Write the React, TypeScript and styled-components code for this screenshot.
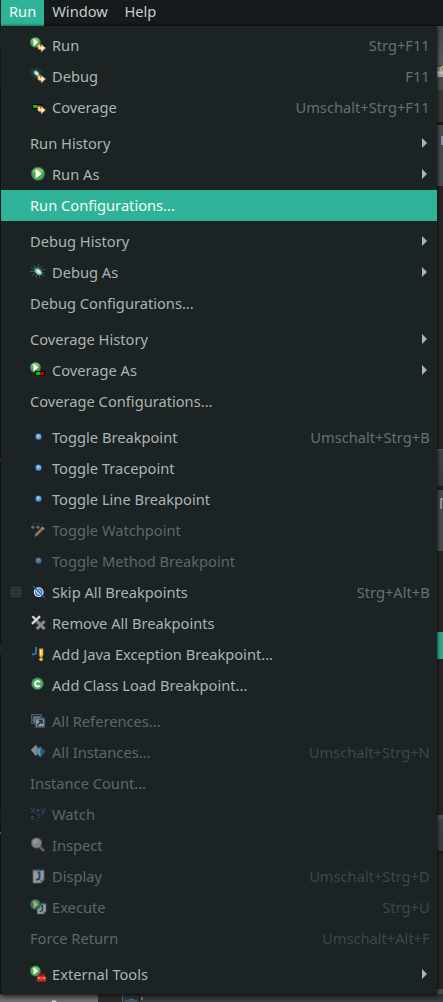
import React from "react";
import styled, { createGlobalStyle } from "styled-components";

const Global = createGlobalStyle`
  * { box-sizing: border-box; }
  body { margin: 0; background: #232122; overflow: hidden; }
`;

const Screen = styled.div`
  width: 443px;
  height: 1002px;
  display: flex;
  flex-direction: column;
  overflow: hidden;
  font-family: "Noto Sans", sans-serif;
  font-size: 14.667px;
  color: #a9b5b2;
`;

const MenuBar = styled.nav`
  display: flex;
  flex: none;
  height: 26px;
  padding-left: 1px;
  background: #151a1c;
  box-shadow: inset 0 -1px #101415;
`;

const BarItem = styled.span<{ $open?: boolean }>`
  padding: 0 8px;
  line-height: 23px;
  height: 26px;
  color: ${(p) => (p.$open ? "#f4fbf9" : "#c5cecb")};
  background: ${(p) => (p.$open ? "#2eb398" : "transparent")};
  &:last-child { padding-left: 8.6px; }
`;

const Middle = styled.div`
  display: flex;
  flex: none;
  height: 968px;
`;

const Edge = styled.div<{ $w: string }>`
  display: flex;
  flex-direction: column;
  width: ${(p) => p.$w};
  flex: none;
  overflow: hidden;
`;

const Segment = styled.div<{ $h: number; $bg: string }>`
  flex: none;
  height: ${(p) => p.$h}px;
  background: ${(p) => p.$bg};
  svg { display: block; }
`;

const Menu = styled.div`
  position: relative;
  width: 436px;
  flex: none;
  padding: 4px 0;
  background: #1c2324;
  border-radius: 0 0 4px 4px;
  box-shadow: 0 0 3px rgba(0, 0, 0, 0.65), 0 2px 5px rgba(0, 0, 0, 0.5);
`;

const Group = styled.div`
  & + & { margin-top: 5px; }
`;

const Row = styled.div<{ $active?: boolean; $disabled?: boolean }>`
  display: flex;
  height: 31px;
  padding: 0 8px;
  line-height: 31px;
  white-space: pre;
  color: ${(p) => (p.$active ? "#f4fbf9" : p.$disabled ? "#5e6866" : "#a9b5b2")};
  background: ${(p) => (p.$active ? "#2eb398" : "transparent")};
`;

const CheckColumn = styled.span`
  width: 21px;
  flex: none;
`;

const CheckBox = styled.span`
  display: block;
  width: 14px;
  height: 14px;
  margin-top: 8px;
  border: 1px solid #131819;
  border-radius: 2px;
  background: #2b3233;
`;

const IconBox = styled.span<{ $dim?: boolean }>`
  width: 16px;
  height: 16px;
  margin: 7px 6px 0 0;
  flex: none;
  opacity: ${(p) => (p.$dim ? 0.62 : 1)};
  svg { display: block; overflow: visible; }
`;

const Label = styled.span`
  flex: 1;
`;

const Shortcut = styled.span<{ $dim?: boolean }>`
  margin-right: -0.7px;
  color: ${(p) => (p.$dim ? "#3e4747" : "#647170")};
`;

const Arrow = styled.span`
  align-self: flex-start;
  margin: 10px 2px 0 0;
  border-left: 5px solid #a9b5b2;
  border-top: 5px solid transparent;
  border-bottom: 5px solid transparent;
`;

const Bottom = styled.div`
  display: flex;
  flex: 1;
`;

const BottomPart = styled.div<{ $w: number; $bg: string }>`
  width: ${(p) => p.$w}px;
  flex: none;
  background: ${(p) => p.$bg};
  svg { display: block; }
`;

const Svg = ({ children }: { children: React.ReactNode }) => (
  <svg width="16" height="16" viewBox="0 0 16 16">{children}</svg>
);

const Play = ({ x, y, r }: { x: number; y: number; r: number }) => (
  <g transform={`translate(${x} ${y}) scale(${r / 7})`}>
    <circle r="7" fill="#2b8443" />
    <circle r="6" fill="#4ba552" />
    <path d="M-5.5-2A6 6 0 0 1 5.5-2Q0 1-5.5-2Z" fill="#86c469" />
    <path d="M-2.4-5 3.8 0-2.4 5Z" fill="#fff" />
  </g>
);

const YellowArrow = () => (
  <g>
    <path d="M7.800 7.600v3q0 2 2.200 2h1.200v2.500l4.300-4-4.300-3.800v2.300h-1V7.600Z" fill="#fbdf92" stroke="#b98648" strokeWidth=".6" />
    <path d="M11.500 8.700v4.900l3-2.600Z" fill="#ffeebc" />
  </g>
);

const Bug = () => (
  <g>
    <path d="M4 1l2 3.500M8.500 0v4M12.500 2l-3 3M1 3.500l4 2M0 7.500h5M2 12l3-3M6 14l1-4M10 14.500l-.5-4M14.500 12l-4-2M11 6l4-.5M11 8.500l3.500.5" stroke="#37716b" strokeWidth=".8" fill="none" />
    <ellipse cx="8.200" cy="7.400" rx="4.600" ry="3.200" transform="rotate(42 8.2 7.4)" fill="#397e70" />
    <ellipse cx="8.500" cy="7.800" rx="3.600" ry="2.200" transform="rotate(42 8.5 7.8)" fill="#a8d5b4" />
    <ellipse cx="8.600" cy="7.400" rx="2" ry="1.200" transform="rotate(42 8.6 7.4)" fill="#e7f3da" />
  </g>
);

const Dot = () => (
  <g>
    <circle cx="8.500" cy="7.700" r="3.400" fill="#2c5d89" />
    <circle cx="8.500" cy="7.500" r="2.600" fill="#65a4d3" />
    <circle cx="8.300" cy="6.800" r="1.300" fill="#a5d0ec" />
  </g>
);

const Notepad = () => (
  <g>
    <path d="M3 2.500h11v9.500l-3 3H3Z" fill="#dce4e8" stroke="#8b8872" strokeWidth=".8" />
    <path d="M3.500 1v2m2-2v2m2-2v2m2-2v2m2-2v2m2-2v2" stroke="#6e7f91" />
    <path d="M14 11.500 10.500 15v-3.500Z" fill="#6aa06a" />
    <path d="M9.500 4.500v5q0 2-2 2H6M7.500 4.500h2.800" fill="none" stroke="#255f98" strokeWidth="2" />
  </g>
);

const icons: Record<string, React.ReactNode> = {
  run: (
    <Svg>
      <Play x={5.3} y={5.3} r={5.4} />
      <YellowArrow />
    </Svg>
  ),
  debug: (
    <Svg>
      <g transform="translate(0 -.6) scale(.78)"><Bug /></g>
      <YellowArrow />
    </Svg>
  ),
  coverage: (
    <Svg>
      <path d="M2 5h10v5H2Z" fill="#000" />
      <path d="M3 6h4v3H3Z" fill="#00c800" />
      <path d="M7 6h4v3H7Z" fill="#c80000" />
      <YellowArrow />
    </Svg>
  ),
  runAs: <Svg><Play x={8} y={7.8} r={7} /></Svg>,
  debugAs: <Svg><Bug /></Svg>,
  coverageAs: (
    <Svg>
      <Play x={5.4} y={5.4} r={5.5} />
      <path d="M5 9h10v5H5Z" fill="#000" />
      <path d="M6 10h4v3H6Z" fill="#00c800" />
      <path d="M10 10h4v3h-4Z" fill="#c80000" />
    </Svg>
  ),
  dot: <Svg><Dot /></Svg>,
  watchpoint: (
    <Svg>
      <path d="M2 4Q3 0 5.500 1.500M7.500 4Q8.500 0 11 1.500 12 2 12 3.500M4 5h3" fill="none" stroke="#35536d" strokeWidth=".9" />
      <circle cx="2.700" cy="5.200" r="1.500" fill="#84a2b8" />
      <circle cx="8" cy="5.200" r="1.500" fill="#84a2b8" />
      <path d="M4.500 14.800 5.500 11.500 12 5l2.200 1.800-6.700 6.700Z" fill="#dda66e" />
      <path d="m10.800 6 1.700-1.500 2.300 1.700-1.600 1.700Z" fill="#f0c18e" />
      <path d="m4 15 .8-2.200 1.500 1.400Z" fill="#776653" />
    </Svg>
  ),
  skip: (
    <Svg>
      <circle cx="8.700" cy="8.200" r="4.900" fill="#d5e8f7" />
      <circle cx="8.700" cy="8.200" r="3.700" fill="#356c9f" />
      <circle cx="8.700" cy="8.200" r="2.600" fill="#83b5d9" />
      <path d="m6 5.500 6 6" stroke="#e4f0fa" strokeWidth="2.400" />
      <path d="m3 2 11.800 12" stroke="#2458a0" strokeWidth="1.200" />
    </Svg>
  ),
  remove: (
    <Svg>
      <path d="m2.500 1.300 7.500 7.500m0-7.500-8 7.500" stroke="#5b5b5b" strokeWidth="3" />
      <path d="m2.500 1.300 7.500 7.500m0-7.500-8 7.500" stroke="#e0e0e0" strokeWidth="1.900" />
      <path d="m6.800 6.200 7.700 7.700m0-7.700-7.700 7.700" stroke="#585858" strokeWidth="3.600" />
      <path d="m6.800 6.200 7.700 7.700m0-7.700-7.700 7.700" stroke="#8e8e8e" strokeWidth="2.300" />
    </Svg>
  ),
  exception: (
    <Svg>
      <path d="M6 1v5q0 2.200-2.200 2.200H2" stroke="#33709f" strokeWidth="2" fill="none" />
      <path d="M9.300 2.800h3.700v6L12.200 11H10L9.300 8.800Z" fill="#f7ca4d" stroke="#bd811f" strokeWidth=".7" />
      <path d="M10.700 4v5" stroke="#fff0a0" />
      <circle cx="11.100" cy="13.300" r="1.700" fill="#f5c744" stroke="#bd811f" strokeWidth=".6" />
    </Svg>
  ),
  classLoad: (
    <Svg>
      <circle cx="7.500" cy="6.700" r="6.200" fill="#258b49" />
      <circle cx="7.500" cy="6.700" r="5.200" fill="#54ae62" />
      <path d="M9.900 5.100A2.700 2.700 0 1 0 9.900 8.500" fill="none" stroke="#fff" strokeWidth="1.900" />
    </Svg>
  ),
  references: (
    <Svg>
      <path d="M1.700 1.500h9.600v9H1.700Z" fill="#263b54" stroke="#6480a6" strokeWidth="1.200" />
      <path d="M3.500 3.500h7v6h-7Z" fill="#c7ced4" />
      <path d="M5.500 5.500h9v8.500h-9Z" fill="#e4e4dc" stroke="#5978a2" strokeWidth="1.300" />
      <path d="m7 12.500 4-4M8.500 7.500H12V11" fill="none" stroke="#203c64" strokeWidth="1.600" />
    </Svg>
  ),
  instances: (
    <Svg>
      <path d="m1 6 5-5 4.500 5.500L6 12Z" fill="#91bad0" />
      <path d="M6 1v11L1 6Z" fill="#c4cfd3" />
      <path d="m5.700 7.500 4.800-5 5 5-5 6Z" fill="#2482b8" />
      <path d="M10.500 2.500v11l-4.800-6Z" fill="#a6c8d7" />
    </Svg>
  ),
  watch: (
    <Svg>
      <path d="m1 2 4 5m0-5L1 7M6 4.500h4M8 2.500v4M11 2.200l2 4.300m2-4.300-2.500 6H11M1 10.500h3M1 12.500h3M6.500 9q2-1.700 3 0 .7 1.400-1.500 2.600v1M8 14v1" fill="none" stroke="#3b659b" strokeWidth="1" />
    </Svg>
  ),
  inspect: (
    <Svg>
      <path d="m9 9 5 5" stroke="#aa8178" strokeWidth="2.500" />
      <circle cx="6.500" cy="6" r="5.500" fill="#888" />
      <circle cx="6.500" cy="6" r="4.600" fill="#c0c0c0" />
      <circle cx="5.500" cy="4.500" r="2.300" fill="#dedede" />
    </Svg>
  ),
  display: <Svg><Notepad /></Svg>,
  execute: (
    <Svg>
      <g transform="translate(4.8 3) scale(.8)"><Notepad /></g>
      <Play x={5.400} y={5.400} r={5.400} />
    </Svg>
  ),
  external: (
    <Svg>
      <Play x={5.400} y={5} r={5.400} />
      <path d="M9 9.500V8h5v1.500" fill="none" stroke="#ca1616" strokeWidth="1.200" />
      <path d="M8 9.500h7l1 2v4H7v-4Z" fill="#dc2424" />
      <path d="M7 12h9" stroke="#f79787" strokeWidth=".7" />
      <path d="M9 11v2m5-2v2" stroke="#f7b0a0" strokeWidth=".8" />
    </Svg>
  ),
};

type Item = { label: string; icon?: string; keys?: string; sub?: boolean; active?: boolean; disabled?: boolean; check?: boolean };

const groups: Item[][] = [
  [
    { label: "Run", icon: "run", keys: "Strg+F11" },
    { label: "Debug", icon: "debug", keys: "F11" },
    { label: "Coverage", icon: "coverage", keys: "Umschalt+Strg+F11" },
  ],
  [
    { label: "Run History", sub: true },
    { label: "Run As", icon: "runAs", sub: true },
    { label: "Run Configurations...", active: true },
  ],
  [
    { label: "Debug History", sub: true },
    { label: "Debug As", icon: "debugAs", sub: true },
    { label: "Debug Configurations..." },
  ],
  [
    { label: "Coverage History", sub: true },
    { label: "Coverage As", icon: "coverageAs", sub: true },
    { label: "Coverage Configurations..." },
  ],
  [
    { label: "Toggle Breakpoint", icon: "dot", keys: "Umschalt+Strg+B" },
    { label: "Toggle Tracepoint", icon: "dot" },
    { label: "Toggle Line Breakpoint", icon: "dot" },
    { label: "Toggle Watchpoint", icon: "watchpoint", disabled: true },
    { label: "Toggle Method Breakpoint", icon: "dot", disabled: true },
    { label: "Skip All Breakpoints", icon: "skip", keys: "Strg+Alt+B", check: true },
    { label: "Remove All Breakpoints", icon: "remove" },
    { label: "Add Java Exception Breakpoint...", icon: "exception" },
    { label: "Add Class Load Breakpoint...", icon: "classLoad" },
  ],
  [
    { label: "All References...", icon: "references", disabled: true },
    { label: "All Instances...", icon: "instances", keys: "Umschalt+Strg+N", disabled: true },
    { label: "Instance Count...", disabled: true },
    { label: "Watch", icon: "watch", disabled: true },
    { label: "Inspect", icon: "inspect", disabled: true },
    { label: "Display", icon: "display", keys: "Umschalt+Strg+D", disabled: true },
    { label: "Execute", icon: "execute", keys: "Strg+U", disabled: true },
    { label: "Force Return", keys: "Umschalt+Alt+F", disabled: true },
  ],
  [{ label: "External Tools", icon: "external", sub: true }],
];

const leftEdge: [number, string][] = [
  [8, "#242526"], [12, "#354033"], [44, "#29292a"], [34, "#201f20"], [144, "#0e1a38"],
  [190, "#211c1b"], [4, "#6b3512"], [182, "#211f20"], [10, "#41400e"], [158, "#211f20"],
  [8, "#303233"], [12, "#211f20"], [2, "#8b8b8b"], [160, "#211f20"],
];

const rightEdge: [number, string][] = [
  [39, "linear-gradient(#464748, #58595a)"],
  [13, "icon"],
  [12, "#4b4c4d"],
  [32, "#393637"],
  [3, "#1c1b1b"],
  [61, "#464a4c"],
  [263, "#262324"],
  [37, "linear-gradient(#535556 0 1px, #414344 1px, #38393b)"],
  [4, "#202020"],
  [61, "#464a4c"],
  [81, "#262324"],
  [27, "#2eaa8f"],
  [156, "#262324"],
  [36, "linear-gradient(#4d5051 0 4px, #3e4041 4px, #393a3c)"],
  [3, "#1b1b1b"],
  [135, "#262324"],
  [6, "#454a4d"],
];

export default function App() {
  return (
    <Screen>
      <Global />
      <MenuBar>
        <BarItem $open>Run</BarItem>
        <BarItem>Window</BarItem>
        <BarItem>Help</BarItem>
      </MenuBar>
      <Middle>
        <Edge $w="1px">
          {leftEdge.map(([h, bg], i) => <Segment key={i} $h={h} $bg={bg} />)}
        </Edge>
        <Menu>
          {groups.map((items, g) => (
            <Group key={g}>
              {items.map((it) => (
                <Row key={it.label} $active={it.active} $disabled={it.disabled}>
                  <CheckColumn>{it.check && <CheckBox />}</CheckColumn>
                  {it.icon && <IconBox $dim={it.disabled}>{icons[it.icon]}</IconBox>}
                  <Label>{it.label}</Label>
                  {it.keys && <Shortcut $dim={it.disabled}>{it.keys}</Shortcut>}
                  {it.sub && <Arrow />}
                </Row>
              ))}
            </Group>
          ))}
        </Menu>
        <Edge $w="6px">
          {rightEdge.map(([h, bg], i) =>
            bg === "icon" ? (
              <Segment key={i} $h={h} $bg="#4a4b4c">
                <svg width="6" height="13">
                  <path d="M0 2h6v10H0Z" fill="#a5a8a5" />
                  <path d="M0 2h6v4H0Z" fill="#5b8bb5" />
                  <path d="M6 1 3 4l3 3" fill="none" stroke="#e0ad44" strokeWidth="1.500" />
                  <path d="M0 8h6" stroke="#dadbd5" />
                </svg>
              </Segment>
            ) : (
              <Segment key={i} $h={h} $bg={bg}>
                {h === 61 && (
                  <svg width="6" height="30">
                    <path d={i === 5 ? "M5 11v9" : "M4 19V9h2"} fill="none" stroke="#a0a8c2" strokeWidth="1.500" />
                  </svg>
                )}
              </Segment>
            ),
          )}
        </Edge>
      </Middle>
      <Bottom>
        <BottomPart $w={98} $bg="linear-gradient(#504f50, #757475)">
          <svg width="98" height="8"><path d="M52 8q2-2 4 0" fill="none" stroke="#d8d8d8" strokeWidth="1.500" /></svg>
        </BottomPart>
        <BottomPart $w={24} $bg="#2b2b2d" />
        <BottomPart $w={1} $bg="#606365" />
        <BottomPart $w={320} $bg="linear-gradient(#292c2e, #3b3f41)">
          <svg width="320" height="8">
            <path d="M2 7h12M6 5.500h5" stroke="#526a91" fill="none" />
            <path d="M16.500 0v8" stroke="#1b2024" />
            <path d="M19 3v3" stroke="#8a8c8e" strokeWidth="1.500" />
          </svg>
        </BottomPart>
      </Bottom>
    </Screen>
  );
}
